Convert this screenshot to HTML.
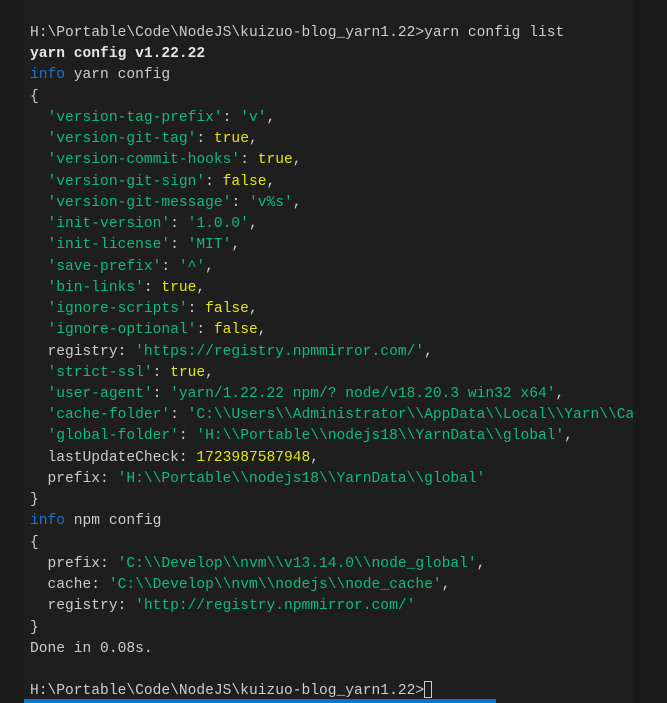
<!DOCTYPE html>
<html><head><meta charset="utf-8"><style>
html,body{margin:0;padding:0;width:667px;height:703px;background:#191919;overflow:hidden}
#p{position:absolute;left:24px;top:0;width:609px;height:703px;background:#1e1e1e;overflow:hidden}
#bar{position:absolute;left:24px;top:699px;width:472px;height:4px;background:#007acc}
pre{position:absolute;left:6px;top:23px;margin:0;font-family:"Liberation Mono",monospace;font-size:14.6px;line-height:21.23px;color:#cccccc;white-space:pre}
.g{color:#0dbc79}.y{color:#e5e510}.b{color:#2472c8}.w{color:#e5e5e5;font-weight:bold}
.cur{display:inline-block;width:8px;height:17px;border:1px solid #ccc;vertical-align:-4px;box-sizing:border-box}
</style></head><body>
<div id="p"><pre>H:\Portable\Code\NodeJS\kuizuo-blog_yarn1.22&gt;yarn config list
<span class="w">yarn config v1.22.22</span>
<span class="b">info</span> yarn config
{
  <span class="g">'version-tag-prefix'</span>: <span class="g">'v'</span>,
  <span class="g">'version-git-tag'</span>: <span class="y">true</span>,
  <span class="g">'version-commit-hooks'</span>: <span class="y">true</span>,
  <span class="g">'version-git-sign'</span>: <span class="y">false</span>,
  <span class="g">'version-git-message'</span>: <span class="g">'v%s'</span>,
  <span class="g">'init-version'</span>: <span class="g">'1.0.0'</span>,
  <span class="g">'init-license'</span>: <span class="g">'MIT'</span>,
  <span class="g">'save-prefix'</span>: <span class="g">'^'</span>,
  <span class="g">'bin-links'</span>: <span class="y">true</span>,
  <span class="g">'ignore-scripts'</span>: <span class="y">false</span>,
  <span class="g">'ignore-optional'</span>: <span class="y">false</span>,
  registry: <span class="g">'https://registry.npmmirror.com/'</span>,
  <span class="g">'strict-ssl'</span>: <span class="y">true</span>,
  <span class="g">'user-agent'</span>: <span class="g">'yarn/1.22.22 npm/? node/v18.20.3 win32 x64'</span>,
  <span class="g">'cache-folder'</span>: <span class="g">'C:\\Users\\Administrator\\AppData\\Local\\Yarn\\Cache\\v6'</span>,
  <span class="g">'global-folder'</span>: <span class="g">'H:\\Portable\\nodejs18\\YarnData\\global'</span>,
  lastUpdateCheck: <span class="y">1723987587948</span>,
  prefix: <span class="g">'H:\\Portable\\nodejs18\\YarnData\\global'</span>
}
<span class="b">info</span> npm config
{
  prefix: <span class="g">'C:\\Develop\\nvm\\v13.14.0\\node_global'</span>,
  cache: <span class="g">'C:\\Develop\\nvm\\nodejs\\node_cache'</span>,
  registry: <span class="g">'http://registry.npmmirror.com/'</span>
}
Done in 0.08s.

H:\Portable\Code\NodeJS\kuizuo-blog_yarn1.22&gt;<span class="cur"></span></pre></div>
<div id="bar"></div>
</body></html>
